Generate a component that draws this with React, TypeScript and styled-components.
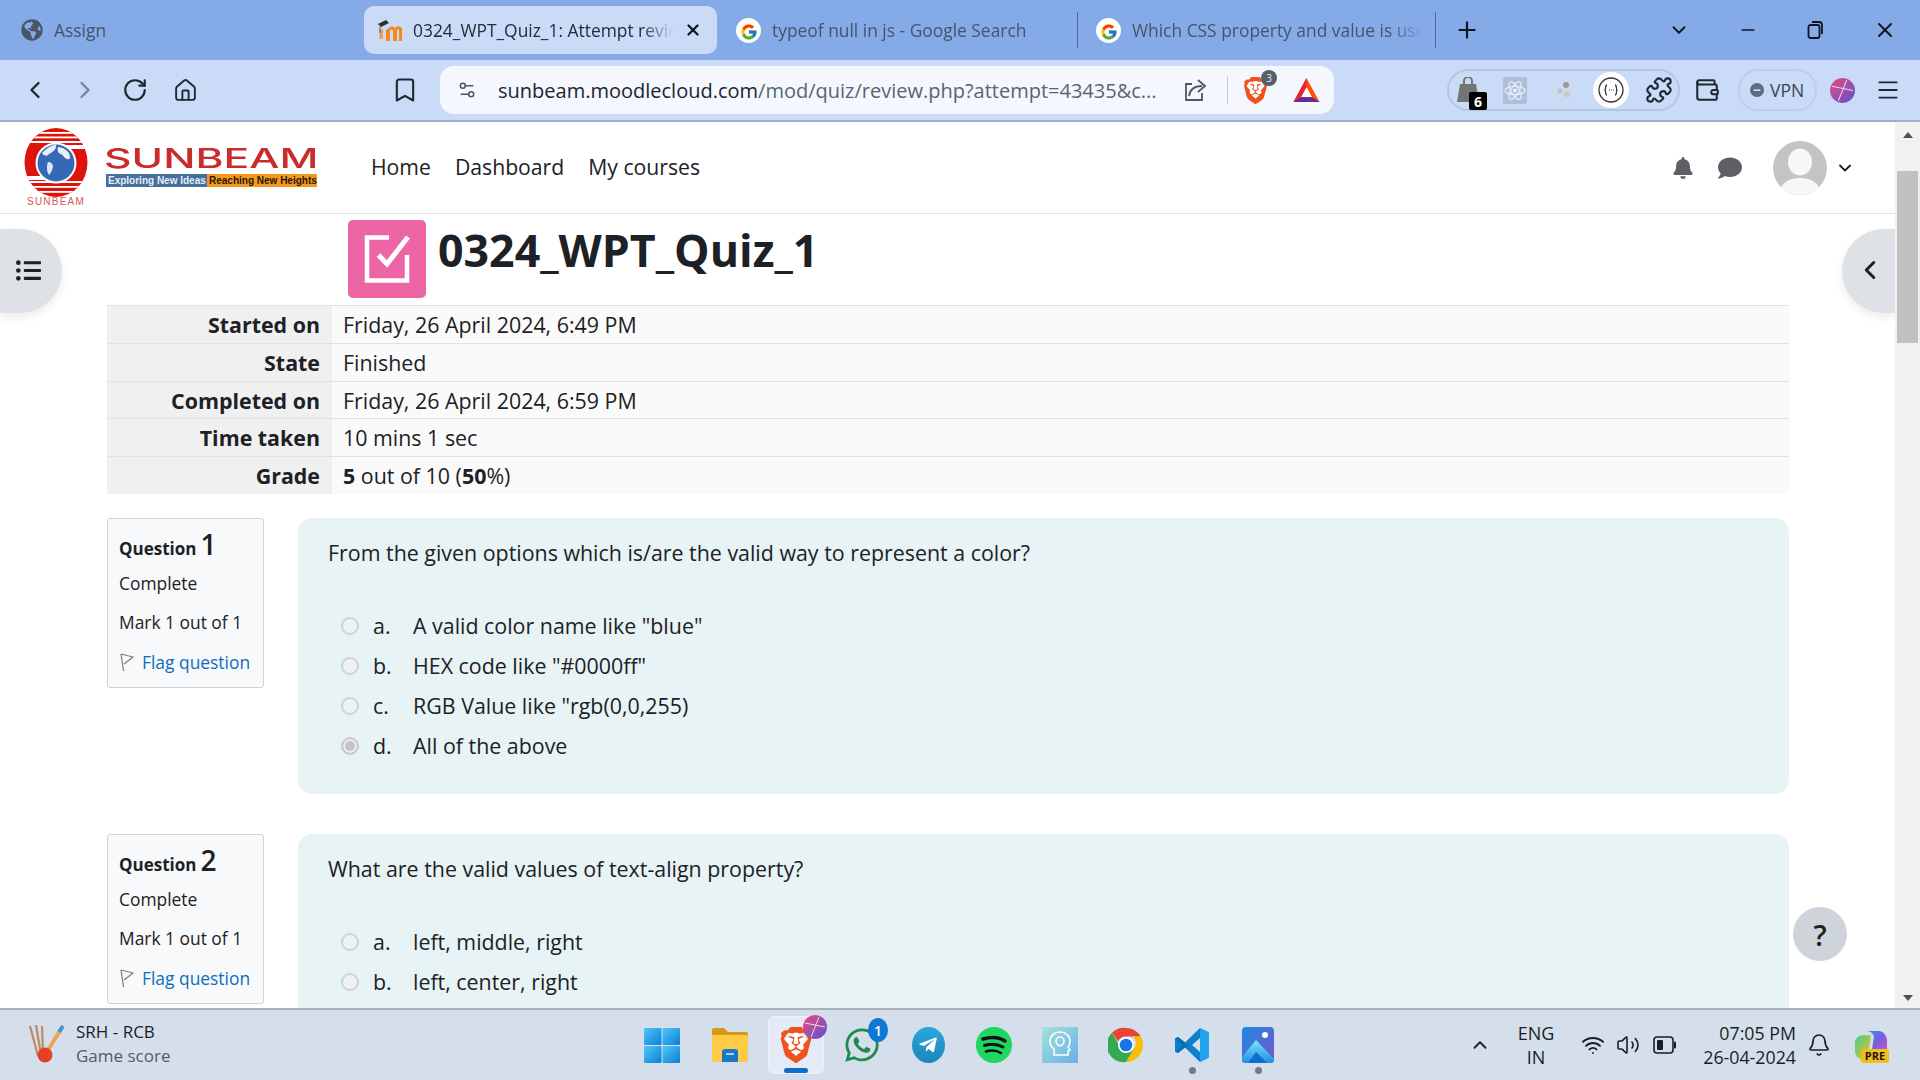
import React from "react";
import styled, { createGlobalStyle } from "styled-components";
import {
  Bell, Bookmark, ChevronDown, ChevronLeft, ChevronRight, ChevronUp, House, Menu, Minus, Plus, Puzzle,
  RotateCw, Settings2, Volume2, Wallet, Wifi, X,
} from "lucide-react";
import { FaBell, FaComment, FaGlobeAmericas, FaListUl, FaSpotify, FaTelegramPlane, FaWhatsapp } from "react-icons/fa";
import { FcGoogle } from "react-icons/fc";
import { SiBrave } from "react-icons/si";

const UI = `"Open Sans", "Noto Sans", sans-serif`;

const Global = createGlobalStyle`
  html, body { margin: 0; padding: 0; height: 100%; overflow: hidden; background: #fff; }
  body { font-family: ${UI}; color: #1d2125; }
  * { box-sizing: border-box; }
`;

const Shell = styled.div`
  width: 1920px;
  height: 1080px;
  display: flex;
  flex-direction: column;
  overflow: hidden;
`;

/* ---------- tab strip ---------- */
const TabStrip = styled.div`
  height: 60px;
  flex: none;
  background: #84abe8;
  display: flex;
  align-items: center;
`;
const Tab = styled.div<{ $w: number; $pl?: number; $active?: boolean; $sep?: boolean }>`
  width: ${(p) => p.$w}px;
  height: 48px;
  flex: none;
  display: flex;
  align-items: center;
  gap: 11px;
  padding-left: ${(p) => p.$pl ?? 14}px;
  border-radius: 10px;
  position: relative;
  background: ${(p) => (p.$active ? "#c9dbf6" : "transparent")};
  color: ${(p) => (p.$active ? "#222c3a" : "#475468")};
  font-size: 17.4px;
  ${(p) => (p.$sep ? "border-right: 1px solid #4f6c99; border-radius: 0; height: 36px;" : "")}
`;
const TabLabel = styled.span<{ $w: number }>`
  width: ${(p) => p.$w}px;
  white-space: nowrap;
  overflow: hidden;
  -webkit-mask-image: linear-gradient(90deg, #000 88%, transparent 100%);
  mask-image: linear-gradient(90deg, #000 88%, transparent 100%);
`;
const PlainLabel = styled.span`
  white-space: nowrap;
`;
const TabClose = styled.span`
  display: flex;
  color: #10151c;
`;
const Gap = styled.div<{ $w: number }>`
  width: ${(p) => p.$w}px;
  flex: none;
`;
const WinButton = styled.div<{ $w: number }>`
  width: ${(p) => p.$w}px;
  flex: none;
  display: flex;
  justify-content: center;
  color: #10151c;
`;

/* ---------- toolbar ---------- */
const Toolbar = styled.div`
  height: 62px;
  flex: none;
  background: #c9dbf6;
  border-bottom: 2px solid #a0b0c8;
  display: flex;
  align-items: center;
  padding-left: 10px;
  color: #2b3442;
`;
const NavSlot = styled.div<{ $w?: number; $dim?: boolean }>`
  width: ${(p) => p.$w ?? 50}px;
  flex: none;
  display: flex;
  justify-content: center;
  color: ${(p) => (p.$dim ? "#75849a" : "#1f2733")};
`;
const UrlBar = styled.div`
  width: 894px;
  height: 48px;
  flex: none;
  background: #f4f7fd;
  border-radius: 14px;
  display: flex;
  align-items: center;
  padding-left: 17px;
  position: relative;
`;
const UrlText = styled.div`
  margin-left: 21px;
  width: 664px;
  flex: none;
  font-size: 20px;
  color: #5a6470;
  white-space: nowrap;
  overflow: hidden;
  b { font-weight: 400; color: #1b2430; }
`;
const UrlDivider = styled.div`
  width: 1px;
  height: 28px;
  background: #c4ccd8;
  margin: 0 14px 0 18px;
`;
const BraveGlyphWrap = styled.div`
  position: relative;
  display: flex;
  flex: none;
  &::before {
    content: "";
    position: absolute;
    left: 22%;
    right: 22%;
    top: 18%;
    bottom: 20%;
    border-radius: 40%;
    background: #fff;
  }
  svg { position: relative; }
`;
const BraveBadge = styled.span`
  position: absolute;
  right: -8px;
  top: -7px;
  width: 16px;
  height: 16px;
  border-radius: 50%;
  background: #585e6a;
  color: #e8ebf0;
  font-size: 10px;
  display: flex;
  align-items: center;
  justify-content: center;
`;
const ExtGroup = styled.div`
  margin-left: 113px;
  width: 233px;
  height: 42px;
  flex: none;
  border: 2px solid #b4c6e0;
  border-radius: 21px;
  display: flex;
  align-items: center;
  position: relative;
`;
const ExtSlot = styled.div<{ $w: number }>`
  width: ${(p) => p.$w}px;
  flex: none;
  display: flex;
  justify-content: center;
  position: relative;
`;
const ExtCount = styled.span`
  position: absolute;
  left: 20px;
  top: 15px;
  width: 18px;
  height: 18px;
  background: #000;
  color: #fff;
  font-size: 14px;
  font-weight: 700;
  border-radius: 2px;
  display: flex;
  align-items: center;
  justify-content: center;
`;
const WhiteDisc = styled.div`
  width: 36px;
  height: 36px;
  border-radius: 50%;
  background: #fff;
  display: flex;
  align-items: center;
  justify-content: center;
`;
const VpnPill = styled.div`
  margin-left: 4px;
  width: 79px;
  height: 42px;
  flex: none;
  border: 2px solid #bccee8;
  border-radius: 20px;
  display: flex;
  align-items: center;
  gap: 6px;
  padding-left: 10px;
  font-size: 17.5px;
  color: #3b4453;
`;
const VpnDot = styled.span`
  width: 14px;
  height: 14px;
  border-radius: 50%;
  background: #5f6b85;
  display: flex;
  align-items: center;
  justify-content: center;
  color: #fff;
`;

/* ---------- page ---------- */
const Body = styled.div`
  flex: 1;
  min-height: 0;
  display: flex;
`;
const Viewport = styled.div`
  flex: 1;
  min-width: 0;
  position: relative;
  overflow: hidden;
  background: #fff;
`;
const Navbar = styled.div`
  height: 92px;
  border-bottom: 1px solid #dee2e6;
  display: flex;
  align-items: center;
  padding-left: 24px;
`;
const LogoMark = styled.div`
  width: 64px;
  display: flex;
  flex-direction: column;
  align-items: center;
  flex: none;
`;
const LogoCaption = styled.span`
  font-family: "Liberation Sans", sans-serif;
  font-size: 10px;
  line-height: 10px;
  color: #d85a50;
  letter-spacing: 1.2px;
  white-space: nowrap;
`;
const LogoWords = styled.div`
  margin-left: 16px;
  width: 214px;
  flex: none;
  display: flex;
  flex-direction: column;
  gap: 3px;
  margin-top: -2px;
`;
const LogoName = styled.span`
  font-family: "Inter", sans-serif;
  font-size: 27px;
  line-height: 25px;
  font-weight: 500;
  color: #ca2b2b;
  white-space: nowrap;
  transform: scaleX(1.58);
  transform-origin: left center;
`;
const Strap = styled.div`
  display: flex;
  height: 13px;
  margin-left: 2px;
  font-family: "Liberation Sans", sans-serif;
  font-weight: 700;
  font-size: 10px;
  line-height: 13px;
  white-space: nowrap;
`;
const StrapPart = styled.span<{ $bg: string; $fg: string; $w: number }>`
  width: ${(p) => p.$w}px;
  background: ${(p) => p.$bg};
  color: ${(p) => p.$fg};
  padding-left: 2px;
`;
const NavLinks = styled.nav`
  margin-left: 53px;
  margin-top: -2px;
  display: flex;
  gap: 24px;
  font-size: 21.2px;
  color: #1d2125;
`;
const NavRight = styled.div`
  margin-left: auto;
  display: flex;
  align-items: center;
  margin-right: 40px;
  color: #5e6065;
`;
const Avatar = styled.div`
  width: 54px;
  height: 54px;
  border-radius: 50%;
  background: #c4c4c4;
  overflow: hidden;
  margin: 0 8px 0 31px;
  display: flex;
`;

const Main = styled.main`
  padding: 0 106px 0 107px;
`;
const TitleRow = styled.div`
  height: 91px;
  padding: 6px 0 0 241px;
  display: flex;
  align-items: flex-start;
  gap: 12px;
`;
const QuizIcon = styled.div`
  width: 78px;
  height: 78px;
  background: #ec65a4;
  border-radius: 5px;
  display: flex;
  align-items: center;
  justify-content: center;
  flex: none;
`;
const Title = styled.h1`
  margin: 0;
  font-size: 44.7px;
  line-height: 60px;
  font-weight: 700;
  color: #1d2125;
`;
const Summary = styled.div`
  display: grid;
  grid-template-columns: 225px 1fr;
  grid-auto-rows: 37.8px;
  font-size: 21.4px;
`;
const SummaryHead = styled.div`
  background: #f0f0f0;
  border-top: 1px solid #dee2e6;
  font-weight: 700;
  text-align: right;
  padding-right: 12px;
  line-height: 37px;
`;
const SummaryCell = styled.div`
  background: #fafafa;
  border-top: 1px solid #dee2e6;
  padding-left: 11px;
  line-height: 37px;
`;
const QuestionRow = styled.section`
  display: flex;
  align-items: flex-start;
  gap: 34px;
  margin-top: 24px;
  & + & { margin-top: 40px; }
`;
const InfoBox = styled.div`
  width: 157px;
  flex: none;
  background: #f8f9fa;
  border: 1px solid #ced4da;
  border-radius: 3px;
  padding: 6px 11px 4px;
  font-size: 17.4px;
`;
const InfoTitle = styled.div`
  height: 39px;
  display: flex;
  align-items: baseline;
  gap: 4px;
  font-size: 17px;
  font-weight: 700;
  line-height: 39px;
  span { font-size: 28px; font-weight: 600; }
`;
const InfoLine = styled.div`
  height: 39px;
  line-height: 39px;
  white-space: nowrap;
`;
const FlagLine = styled(InfoLine)`
  height: 41px;
  display: flex;
  align-items: center;
  gap: 8px;
  color: #0f6cbf;
`;
const QuestionBox = styled.div<{ $minH: number }>`
  flex: 1;
  min-height: ${(p) => p.$minH}px;
  background: #e7f3f5;
  border-radius: 14px;
  padding: 18px 30px 28px;
`;
const Prompt = styled.div`
  font-size: 21.4px;
  line-height: 34px;
  margin-bottom: 36px;
`;
const Option = styled.div`
  height: 40px;
  display: flex;
  align-items: center;
  font-size: 21.4px;
  padding-left: 13px;
`;
const Radio = styled.span<{ $on?: boolean }>`
  width: 18px;
  height: 18px;
  border-radius: 50%;
  flex: none;
  border: 2px solid ${(p) => (p.$on ? "#c9c9c9" : "#cfd2d4")};
  background: ${(p) => (p.$on ? "#c4c4c4" : "#eef2f3")};
  box-shadow: ${(p) => (p.$on ? "inset 0 0 0 2px #eef1f2" : "none")};
`;
const OptionKey = styled.span`
  width: 40px;
  margin-left: 14px;
  flex: none;
`;
const DrawerHandle = styled.div<{ $side: "left" | "right" }>`
  position: absolute;
  top: 107px;
  ${(p) => p.$side}: 0;
  width: ${(p) => (p.$side === "left" ? 62 : 53)}px;
  height: 84px;
  background: #dee2e6;
  border-radius: ${(p) => (p.$side === "left" ? "0 42px 42px 0" : "42px 0 0 42px")};
  box-shadow: 0 4px 10px rgba(0, 0, 0, .08);
  display: flex;
  align-items: center;
  color: #1d2125;
  padding: 0 0 2px ${(p) => (p.$side === "left" ? 16 : 13)}px;
`;
const HelpButton = styled.div`
  position: absolute;
  left: 1793px;
  top: 785px;
  width: 54px;
  height: 54px;
  border-radius: 50%;
  background: #ced4da;
  display: flex;
  align-items: center;
  justify-content: center;
  font-size: 29px;
  font-weight: 600;
  color: #1d2125;
`;
const Scrollbar = styled.div`
  width: 25px;
  flex: none;
  background: #f1f1f1;
  display: flex;
  flex-direction: column;
  align-items: center;
  padding: 10px 0 7px;
`;
const ThumbArea = styled.div`
  flex: 1;
  width: 100%;
  padding: 33px 2px 0;
`;
const Thumb = styled.div`
  height: 172px;
  background: #c1c1c1;
`;
const Arrow = styled.div<{ $down?: boolean }>`
  width: 0;
  height: 0;
  border-left: 5.5px solid transparent;
  border-right: 5.5px solid transparent;
  ${(p) => (p.$down ? "border-top: 6px solid #505050;" : "border-bottom: 6px solid #505050;")}
`;

/* ---------- taskbar ---------- */
const Taskbar = styled.div`
  height: 72px;
  flex: none;
  background: #d5deeb;
  border-top: 2px solid #aab1ba;
  display: flex;
  align-items: center;
`;
const Widget = styled.div`
  width: 629px;
  flex: none;
  display: flex;
  align-items: center;
  padding: 0 0 2px 27px;
  gap: 12px;
`;
const WidgetText = styled.div`
  font-size: 17px;
  line-height: 24px;
  color: #1a1f27;
  small { display: block; font-size: 17px; color: #555b64; }
`;
const TaskSlot = styled.div`
  width: 66px;
  height: 58px;
  flex: none;
  display: flex;
  align-items: center;
  justify-content: center;
  position: relative;
`;
const ActivePlate = styled.div`
  position: absolute;
  left: 5px;
  right: 5px;
  top: 0;
  bottom: 0;
  background: #e4ebf6;
  border: 1px solid #eef2f8;
  border-radius: 6px;
`;
const TaskGlyph = styled.div`
  position: relative;
  display: flex;
`;
const RunBar = styled.span`
  position: absolute;
  left: 21px;
  bottom: 1px;
  width: 24px;
  height: 5px;
  background: #0f6cc9;
  border-radius: 3px;
`;
const RunDot = styled.span`
  position: absolute;
  left: 30px;
  bottom: 0;
  width: 7px;
  height: 7px;
  background: #727a85;
  border-radius: 50%;
`;
const Count = styled.span`
  position: absolute;
  right: -7px;
  top: -8px;
  width: 20px;
  height: 24px;
  border-radius: 50%;
  background: #0f78d4;
  color: #fff;
  font-size: 14px;
  font-weight: 600;
  display: flex;
  align-items: center;
  justify-content: center;
`;
const ProfileOverlay = styled.span`
  position: absolute;
  right: -13px;
  top: -12px;
  display: flex;
`;
const Tray = styled.div`
  flex: 1;
  display: flex;
  align-items: center;
  color: #1a1f27;
`;
const TrayItem = styled.div<{ $w: number }>`
  width: ${(p) => p.$w}px;
  flex: none;
  display: flex;
  justify-content: center;
  text-align: center;
  font-size: 18px;
  line-height: 24px;
  position: relative;
`;
const Clock = styled.div`
  width: 118px;
  flex: none;
  text-align: right;
  font-size: 17.8px;
  line-height: 24px;
  white-space: nowrap;
`;
const PreTag = styled.span`
  position: absolute;
  left: 10px;
  bottom: -3px;
  width: 28px;
  height: 14px;
  background: #f2bd1d;
  color: #20180a;
  border-radius: 3px;
  font-size: 11px;
  line-height: 14px;
  font-weight: 700;
  text-align: center;
`;

/* ---------- drawings ---------- */
const GIcon = () => (
  <svg width="25" height="25" viewBox="0 0 25 25">
    <circle cx="12.5" cy="12.5" r="12.5" fill="#fff" />
    <foreignObject x="3.5" y="3.5" width="18" height="18"><FcGoogle size={18} /></foreignObject>
  </svg>
);
const MoodleIcon = () => (
  <svg width="24" height="22" viewBox="0 0 24 22">
    <path d="M8 11v11h4V12c0-2 3-2 3 0v10h4V12c0-2 2-2 2 0v10h3V10c0-3-5-4-7-1-2-2-5-2-6 0z" fill="#f38a1c" />
    <path d="M5 10V20H1.500V11z" fill="#f38a1c" opacity=".75" />
    <path d="M0 5l8-4 3 3-8 4z" fill="#2f2f2f" />
    <path d="M2 8v6" stroke="#555" strokeWidth="1" />
  </svg>
);
const BatTriangle = () => (
  <svg width="27" height="27" viewBox="0 0 27 27">
    <path d="M13.500 1L26.500 25H.5z" fill="#ff5000" />
    <path d="M13.500 10L19 20H8z" fill="#fff" />
    <path d="M.5 25L8 20H19L26.500 25z" fill="#662d91" />
    <path d="M13.500 1v9L8 20 .5 25z" fill="#e1243f" />
  </svg>
);
const ShareIcon = () => (
  <svg width="26" height="26" viewBox="0 0 26 26" fill="none" stroke="#4d5866" strokeWidth="1.800">
    <path d="M9 7H3v16h16v-7" />
    <path d="M6 19c1-7 6-10 13-10M15 3l7 6-7 6" />
  </svg>
);
const BagIcon = () => (
  <svg width="24" height="26" viewBox="0 0 24 26">
    <path d="M4 7h16l3 18H1z" fill="#747474" />
    <path d="M8 8V4a4 4 0 018 0v4" stroke="#747474" strokeWidth="2" fill="none" />
  </svg>
);
const AtomIcon = () => (
  <svg width="24" height="27" viewBox="0 0 24 27">
    <rect width="24" height="27" rx="2" fill="#acbfdb" />
    <g fill="none" stroke="#e9f0fa" strokeWidth="1.200">
      <ellipse cx="12" cy="13.500" rx="10" ry="4" />
      <ellipse cx="12" cy="13.500" rx="10" ry="4" transform="rotate(60 12 13.500)" />
      <ellipse cx="12" cy="13.500" rx="10" ry="4" transform="rotate(120 12 13.500)" />
    </g>
    <circle cx="12" cy="13.500" r="2" fill="#e9f0fa" />
  </svg>
);
const DotsIcon = () => (
  <svg width="26" height="28" viewBox="0 0 26 28">
    <circle cx="13" cy="14" r="11" fill="none" stroke="#d8dad9" strokeWidth="2" strokeDasharray="2 2" />
    <circle cx="16" cy="9" r="3" fill="#9b9a95" />
    <circle cx="10" cy="15" r="2.500" fill="#c7c2b4" />
    <circle cx="17" cy="18" r="3" fill="#d0c9b7" />
  </svg>
);
const BraceIcon = () => (
  <svg width="28" height="28" viewBox="0 0 28 28" fill="none" stroke="#333" strokeWidth="1.300">
    <circle cx="14" cy="14" r="12" />
    <path d="M10 9c-2 0-1 4-2 5 1 1 0 5 2 5M18 9c2 0 1 4 2 5-1 1 0 5-2 5" />
    <path d="M12 14h.6M14 14h.6M16 14h.6" />
  </svg>
);
const ProfileBall = ({ size }: { size: number }) => (
  <svg width={size} height={size} viewBox="0 0 24 24">
    <defs>
      <linearGradient id="pb" x1="0" y1="0" x2="1" y2="1">
        <stop offset="0" stopColor="#ec4a7d" />
        <stop offset="1" stopColor="#5a52d5" />
      </linearGradient>
    </defs>
    <circle cx="12" cy="12" r="12" fill="url(#pb)" />
    <path d="M2 8l20 4M8 22l8-20" stroke="#f5d7e8" strokeWidth="1" />
  </svg>
);
const LogoGlobe = () => (
  <svg width="64" height="69" viewBox="0 0 64 69">
    <defs>
      <clipPath id="lg"><ellipse cx="32" cy="34.500" rx="31.500" ry="34.500" /></clipPath>
    </defs>
    <g clipPath="url(#lg)">
      <rect width="64" height="69" fill="#dc140c" />
      <g fill="#fff">
        <rect y="4" width="64" height="1.800" />
        <rect y="8.500" width="64" height="1.800" />
        <rect y="13" width="64" height="2" />
        <rect y="53" width="64" height="2" />
        <rect y="58" width="64" height="1.800" />
        <rect y="63" width="64" height="1.800" />
        <path d="M36 17H64V21H36z" />
        <path d="M0 48H28V52H0z" />
      </g>
    </g>
    <circle cx="32" cy="35" r="20.500" fill="#fff" />
    <circle cx="32" cy="35" r="18.500" fill="#3568b5" />
    <path d="M18 25c6-6 10-8 14-8 1 4-3 7-7 9-2 3-5 2-7-1zM34 19c4 0 8 2 11 6 2 5 1 7-2 6-3-1-4-4-6-5-3 0-4-4-3-7z" fill="#e7eef8" />
    <path d="M24 34c3 0 5 2 5 5-1 4-3 7-4 8-2-3-3-8-1-13z" fill="#dbe7f5" />
  </svg>
);
const QuizCheck = () => (
  <svg width="46" height="50" viewBox="0 0 46 50" fill="none" stroke="#fff" strokeWidth="4.500">
    <path d="M25 3.500H3v43h40V21" />
    <path d="M14.500 21L23 30 44 3" strokeWidth="5" />
  </svg>
);
const FlagIcon = () => (
  <svg width="15" height="19" viewBox="0 0 15 19" fill="none" stroke="#7b7b7b" strokeWidth="1.200">
    <path d="M2 1l2.500 17M2 1l12 3-9 7" />
  </svg>
);
const AvatarFigure = () => (
  <svg width="54" height="54" viewBox="0 0 54 54">
    <ellipse cx="27" cy="21" rx="12" ry="13.500" fill="#f7f7f7" />
    <path d="M6 54c1-13 11-17 21-17s20 4 21 17z" fill="#f7f7f7" />
  </svg>
);
const CricketIcon = () => (
  <svg width="37" height="38" viewBox="0 0 37 38">
    <path d="M3 1l8 30M9 0l5 30M15 1l1 28" stroke="#c08a62" strokeWidth="2.200" />
    <path d="M36 1L21 25" stroke="#e9a457" strokeWidth="4" />
    <path d="M36 1l-4 6" stroke="#3a9bdc" strokeWidth="4" />
    <circle cx="18" cy="30" r="7.500" fill="#e4402a" />
  </svg>
);
const WindowsIcon = () => (
  <svg width="36" height="35" viewBox="0 0 36 35">
    <defs>
      <linearGradient id="w1" x1="0" y1="0" x2="1" y2="1"><stop offset="0" stopColor="#52c7f8" /><stop offset="1" stopColor="#0a7fd6" /></linearGradient>
    </defs>
    <g fill="url(#w1)">
      <rect x="0" y="0" width="17.500" height="17" rx="1" />
      <rect x="18.500" y="0" width="17.500" height="17" rx="1" />
      <rect x="0" y="18" width="17.500" height="17" rx="1" />
      <rect x="18.500" y="18" width="17.500" height="17" rx="1" />
    </g>
  </svg>
);
const FolderIcon = () => (
  <svg width="36" height="34" viewBox="0 0 36 34">
    <path d="M0 2a2 2 0 012-2h10l4 4h18a2 2 0 012 2v3H0z" fill="#d89a12" />
    <path d="M0 7h34a2 2 0 012 2v25H2a2 2 0 01-2-2z" fill="#fdcb45" />
    <path d="M10 24a3 3 0 013-3h10a3 3 0 013 3v10H10z" fill="#1a78c6" />
    <rect x="14" y="25" width="8" height="2" fill="#a8d4f2" />
  </svg>
);
const ChromeIcon = () => (
  <svg width="36" height="36" viewBox="0 0 36 36">
    <path d="M18 1a17 17 0 0114.700 8.500H18a8.500 8.500 0 00-7.800 5L4 5.800A17 17 0 0118 1z" fill="#ea4335" />
    <path d="M32.700 9.500A17 17 0 0118 35l7.400-12.700A8.500 8.500 0 0025 9.500z" fill="#fbbc04" />
    <path d="M18 35A17 17 0 014 5.800l7.200 12.400a8.500 8.500 0 0014.200 4.100z" fill="#34a853" />
    <circle cx="18" cy="18" r="8" fill="#fff" />
    <circle cx="18" cy="18" r="6.300" fill="#1a73e8" />
  </svg>
);
const VsCodeIcon = () => (
  <svg width="36" height="36" viewBox="0 0 36 36">
    <path d="M26 1l9 4.500v25L26 35 11 20.500 4 26l-3-1.500v-13L4 10l7 5.500z" fill="#0f7fcc" />
    <path d="M26 1l9 4.500v25L26 35V25l-7-7 7-7z" fill="#21a4ee" />
    <path d="M11 15.500L4 10 1 11.500 8 18 1 24.500 4 26l7-5.500 5-2.500z" fill="#0b6fb8" />
    <path d="M26 11l-8 7 8 7z" fill="#d5deeb" />
  </svg>
);
const PhotosIcon = () => (
  <svg width="32" height="36" viewBox="0 0 32 36">
    <defs>
      <linearGradient id="ph" x1="0" y1="0" x2="1" y2="1"><stop offset="0" stopColor="#1e88e5" /><stop offset="1" stopColor="#7a55c7" /></linearGradient>
      <linearGradient id="ph2" x1="0" y1="0" x2="0" y2="1"><stop offset="0" stopColor="#7fe6f5" /><stop offset="1" stopColor="#1c8fe0" /></linearGradient>
    </defs>
    <rect width="32" height="36" rx="4" fill="url(#ph)" />
    <circle cx="23" cy="8" r="3" fill="#fff" />
    <path d="M0 30L14 13l18 19v1a3 3 0 01-3 3H3a3 3 0 01-3-3z" fill="url(#ph2)" />
    <path d="M6 36l8-11 11 11z" fill="#0d6ed0" />
  </svg>
);
const TileIcon = () => (
  <svg width="36" height="36" viewBox="0 0 36 36">
    <defs>
      <linearGradient id="ti" x1="0" y1="0" x2="1" y2="1"><stop offset="0" stopColor="#a4e3d8" /><stop offset="1" stopColor="#6aaee8" /></linearGradient>
    </defs>
    <rect width="36" height="36" fill="url(#ti)" />
    <path d="M12 28v-6c-3-2-4-5-4-8a10 9 0 0120 0c0 3-1 5-2 6l2 3-2 1v4zM14 14a4 4 0 018 0c0 2-1 4-4 5-3-1-4-3-4-5z" fill="none" stroke="#fff" strokeWidth="1.500" />
  </svg>
);
const SpotifyIcon = () => (
  <svg width="36" height="36" viewBox="0 0 36 36">
    <circle cx="18" cy="18" r="18" fill="#1ed760" />
    <foreignObject width="36" height="36"><FaSpotify size={36} color="#1ed760" /></foreignObject>
    <g fill="none" stroke="#111" strokeLinecap="round">
      <path d="M7 12c7-2 16-2 22 2" strokeWidth="3.400" />
      <path d="M8.500 18.500c6-2 13-1.500 18.500 1.500" strokeWidth="2.900" />
      <path d="M10 24.500c5-1.500 11-1 15 1.500" strokeWidth="2.400" />
    </g>
  </svg>
);
const TelegramBall = () => (
  <svg width="33" height="36" viewBox="0 0 33 36">
    <defs><linearGradient id="tg" x1="0" y1="0" x2="0" y2="1"><stop offset="0" stopColor="#2aa7e0" /><stop offset="1" stopColor="#1c86b8" /></linearGradient></defs>
    <ellipse cx="16.500" cy="18" rx="16.500" ry="18" fill="url(#tg)" />
    <foreignObject x="6" y="8" width="20" height="20"><FaTelegramPlane size={20} color="#fff" /></foreignObject>
  </svg>
);
const CopilotIcon = () => (
  <svg width="34" height="30" viewBox="0 0 36 34" preserveAspectRatio="none">
    <defs>
      <linearGradient id="cp" x1="0" y1="0" x2="1" y2="1">
        <stop offset="0" stopColor="#2a9ce8" /><stop offset=".5" stopColor="#7a5ae0" /><stop offset="1" stopColor="#e05ab8" />
      </linearGradient>
      <linearGradient id="cp2" x1="0" y1="0" x2="1" y2="1">
        <stop offset="0" stopColor="#3fcf8e" /><stop offset="1" stopColor="#f2c21d" />
      </linearGradient>
    </defs>
    <path d="M12 1h14c5 0 9 5 9 12v10c0 5-4 7-8 7H18l3-22c0-4-3-7-9-7z" fill="url(#cp)" />
    <path d="M10 6h8l-3 22c0 3-3 5-6 5-5 0-8-4-8-10V15C1 10 5 6 10 6z" fill="url(#cp2)" />
  </svg>
);
const BatteryIcon = () => (
  <svg width="24" height="20" viewBox="0 0 24 20" fill="none">
    <rect x="1" y="2" width="19" height="16" rx="3" stroke="#1a1f27" strokeWidth="1.600" />
    <rect x="4" y="5" width="6" height="10" rx="1" fill="#1a1f27" />
    <path d="M22 7.500v5" stroke="#1a1f27" strokeWidth="2" strokeLinecap="round" />
  </svg>
);

const QUESTIONS = [
  {
    n: 1,
    prompt: "From the given options which is/are the valid way to represent a color?",
    options: ['A valid color name like "blue"', 'HEX code like "#0000ff"', 'RGB Value like "rgb(0,0,255)', "All of the above"],
    chosen: 3,
    minH: 276,
  },
  {
    n: 2,
    prompt: "What are the valid values of text-align property?",
    options: ["left, middle, right", "left, center, right"],
    chosen: -1,
    minH: 300,
  },
];

const SUMMARY: [string, React.ReactNode][] = [
  ["Started on", "Friday, 26 April 2024, 6:49 PM"],
  ["State", "Finished"],
  ["Completed on", "Friday, 26 April 2024, 6:59 PM"],
  ["Time taken", "10 mins 1 sec"],
  ["Grade", <><b>5</b> out of 10 (<b>50</b>%)</>],
];

export default function App() {
  return (
    <Shell>
      <Global />
      <TabStrip>
        <Tab $w={364} $pl={21}>
          <FaGlobeAmericas size={22} color="#4a5666" />
          <PlainLabel>Assign</PlainLabel>
        </Tab>
        <Tab $w={353} $active>
          <MoodleIcon />
          <TabLabel $w={260}>0324_WPT_Quiz_1: Attempt review</TabLabel>
          <TabClose><X size={18} strokeWidth={3} /></TabClose>
        </Tab>
        <Gap $w={5} />
        <Tab $w={356} $sep>
          <GIcon />
          <TabLabel $w={300}>typeof null in js - Google Search</TabLabel>
        </Tab>
        <Gap $w={4} />
        <Tab $w={354} $sep>
          <GIcon />
          <TabLabel $w={292}>Which CSS property and value is used</TabLabel>
        </Tab>
        <Gap $w={18} />
        <WinButton $w={26}><Plus size={26} strokeWidth={2} /></WinButton>
        <Gap $w={187} />
        <WinButton $w={24}><ChevronDown size={22} strokeWidth={2} /></WinButton>
        <Gap $w={45} />
        <WinButton $w={24}><Minus size={20} strokeWidth={2} /></WinButton>
        <Gap $w={44} />
        <WinButton $w={22}>
          <svg width="16" height="18" viewBox="0 0 16 18" fill="none" stroke="#10151c" strokeWidth="1.800"><rect x="1.500" y="4" width="11" height="13" rx="2" /><path d="M5 1h7a3 3 0 013 3v9" /></svg>
        </WinButton>
        <Gap $w={47} />
        <WinButton $w={24}><X size={24} strokeWidth={2} /></WinButton>
      </TabStrip>

      <Toolbar>
        <NavSlot><ChevronLeft size={28} strokeWidth={2} /></NavSlot>
        <NavSlot $dim><ChevronRight size={28} strokeWidth={2} /></NavSlot>
        <NavSlot><RotateCw size={26} strokeWidth={2} /></NavSlot>
        <NavSlot><House size={25} strokeWidth={1.800} /></NavSlot>
        <Gap $w={170} />
        <NavSlot $w={50}><Bookmark size={28} strokeWidth={1.800} /></NavSlot>
        <Gap $w={10} />
        <UrlBar>
          <Settings2 size={20} color="#4d5866" strokeWidth={1.800} />
          <UrlText><b>sunbeam.moodlecloud.com</b>/mod/quiz/review.php?attempt=43435&amp;c...</UrlText>
          <Gap $w={21} />
          <ShareIcon />
          <UrlDivider />
          <BraveGlyphWrap>
            <SiBrave size={27} color="#f1501f" />
            <BraveBadge>3</BraveBadge>
          </BraveGlyphWrap>
          <Gap $w={24} />
          <BatTriangle />
        </UrlBar>
        <ExtGroup>
          <ExtSlot $w={38}><BagIcon /><ExtCount>6</ExtCount></ExtSlot>
          <ExtSlot $w={56}><AtomIcon /></ExtSlot>
          <ExtSlot $w={40}><DotsIcon /></ExtSlot>
          <ExtSlot $w={56}><WhiteDisc><BraceIcon /></WhiteDisc></ExtSlot>
          <ExtSlot $w={39}><Puzzle size={28} strokeWidth={1.800} color="#1f2733" /></ExtSlot>
        </ExtGroup>
        <NavSlot $w={54}><Wallet size={26} strokeWidth={1.900} /></NavSlot>
        <VpnPill><VpnDot><Minus size={10} strokeWidth={3} /></VpnDot>VPN</VpnPill>
        <NavSlot $w={50}><ProfileBall size={25} /></NavSlot>
        <NavSlot $w={42}><Menu size={26} strokeWidth={1.700} /></NavSlot>
      </Toolbar>

      <Body>
        <Viewport>
          <Navbar>
            <LogoMark>
              <LogoGlobe />
              <LogoCaption>SUNBEAM</LogoCaption>
            </LogoMark>
            <LogoWords>
              <LogoName>SUNBEAM</LogoName>
              <Strap>
                <StrapPart $w={101} $bg="#43709f" $fg="#e6eef6">Exploring New Ideas</StrapPart>
                <StrapPart $w={110} $bg="#f7981d" $fg="#231a0a">Reaching New Heights</StrapPart>
              </Strap>
            </LogoWords>
            <NavLinks>
              <span>Home</span>
              <span>Dashboard</span>
              <span>My courses</span>
            </NavLinks>
            <NavRight>
              <FaBell size={22} />
              <Gap $w={24} />
              <FaComment size={24} />
              <Avatar><AvatarFigure /></Avatar>
              <ChevronDown size={20} strokeWidth={2.200} color="#1d2125" />
            </NavRight>
          </Navbar>
          <Main>
            <TitleRow>
              <QuizIcon><QuizCheck /></QuizIcon>
              <Title>0324_WPT_Quiz_1</Title>
            </TitleRow>
            <Summary>
              {SUMMARY.map(([k, v]) => (
                <React.Fragment key={k}>
                  <SummaryHead>{k}</SummaryHead>
                  <SummaryCell>{v}</SummaryCell>
                </React.Fragment>
              ))}
            </Summary>
            {QUESTIONS.map((q) => (
              <QuestionRow key={q.n}>
                <InfoBox>
                  <InfoTitle>Question <span>{q.n}</span></InfoTitle>
                  <InfoLine>Complete</InfoLine>
                  <InfoLine>Mark 1 out of 1</InfoLine>
                  <FlagLine><FlagIcon />Flag question</FlagLine>
                </InfoBox>
                <QuestionBox $minH={q.minH}>
                  <Prompt>{q.prompt}</Prompt>
                  {q.options.map((o, i) => (
                    <Option key={o}>
                      <Radio $on={i === q.chosen} />
                      <OptionKey>{"abcd"[i]}.</OptionKey>
                      {o}
                    </Option>
                  ))}
                </QuestionBox>
              </QuestionRow>
            ))}
          </Main>
          <DrawerHandle $side="left"><FaListUl size={25} /></DrawerHandle>
          <DrawerHandle $side="right"><ChevronLeft size={30} strokeWidth={2.400} /></DrawerHandle>
          <HelpButton>?</HelpButton>
        </Viewport>
        <Scrollbar>
          <Arrow />
          <ThumbArea><Thumb /></ThumbArea>
          <Arrow $down />
        </Scrollbar>
      </Body>

      <Taskbar>
        <Widget>
          <CricketIcon />
          <WidgetText>SRH - RCB<small>Game score</small></WidgetText>
        </Widget>
        <TaskSlot><WindowsIcon /></TaskSlot>
        <Gap $w={2} />
        <TaskSlot><FolderIcon /></TaskSlot>
        <TaskSlot>
          <ActivePlate />
          <TaskGlyph>
            <BraveGlyphWrap><SiBrave size={36} color="#f1501f" /></BraveGlyphWrap>
            <ProfileOverlay><ProfileBall size={24} /></ProfileOverlay>
          </TaskGlyph>
          <RunBar />
        </TaskSlot>
        <TaskSlot>
          <TaskGlyph>
            <FaWhatsapp size={38} color="#1f8a50" />
            <Count>1</Count>
          </TaskGlyph>
        </TaskSlot>
        <TaskSlot><TelegramBall /></TaskSlot>
        <TaskSlot><SpotifyIcon /></TaskSlot>
        <TaskSlot><TileIcon /></TaskSlot>
        <TaskSlot><ChromeIcon /></TaskSlot>
        <TaskSlot><VsCodeIcon /><RunDot /></TaskSlot>
        <TaskSlot><PhotosIcon /><RunDot /></TaskSlot>
        <Tray>
          <Gap $w={178} />
          <TrayItem $w={22}><ChevronUp size={22} strokeWidth={2} /></TrayItem>
          <Gap $w={21} />
          <TrayItem $w={48}><div>ENG<br />IN</div></TrayItem>
          <Gap $w={19} />
          <TrayItem $w={28}><Wifi size={24} strokeWidth={1.900} /></TrayItem>
          <Gap $w={8} />
          <TrayItem $w={26}><Volume2 size={24} strokeWidth={1.600} /></TrayItem>
          <Gap $w={11} />
          <TrayItem $w={26}><BatteryIcon /></TrayItem>
          <Clock>07:05 PM<br />26-04-2024</Clock>
          <Gap $w={11} />
          <TrayItem $w={24}><Bell size={24} strokeWidth={1.700} /></TrayItem>
          <Gap $w={20} />
          <TrayItem $w={40}><CopilotIcon /><PreTag>PRE</PreTag></TrayItem>
        </Tray>
      </Taskbar>
    </Shell>
  );
}
